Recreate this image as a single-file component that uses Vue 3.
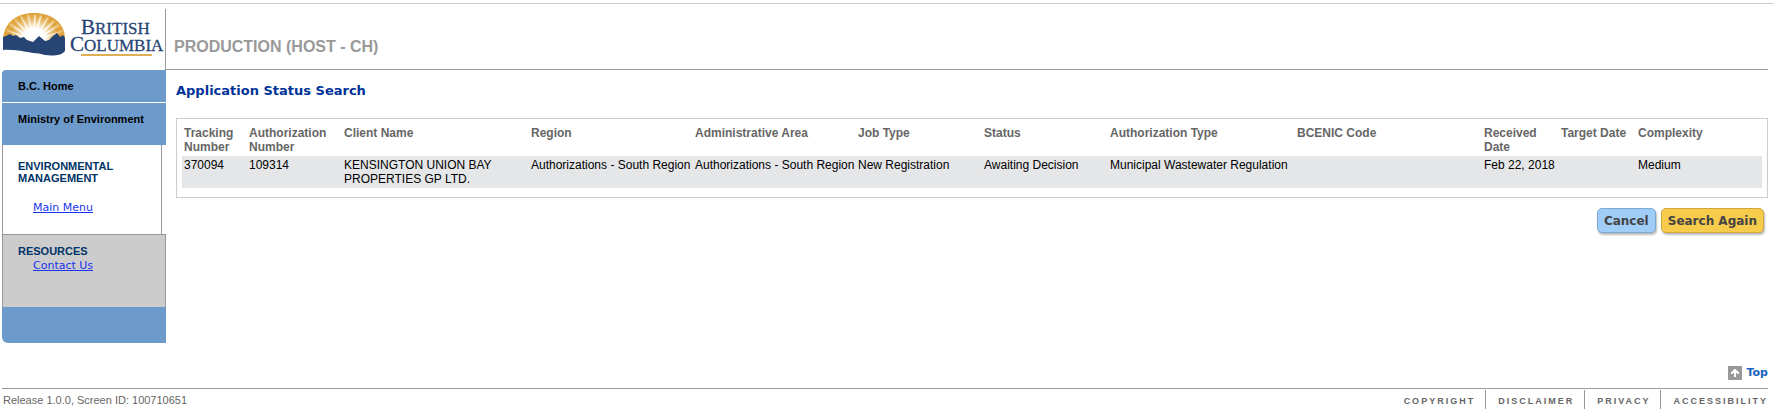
<script setup>
const columns = [
  { key: 'tracking', label: 'Tracking Number' },
  { key: 'authorization', label: 'Authorization Number' },
  { key: 'client', label: 'Client Name' },
  { key: 'region', label: 'Region' },
  { key: 'area', label: 'Administrative Area' },
  { key: 'job', label: 'Job Type' },
  { key: 'status', label: 'Status' },
  { key: 'authType', label: 'Authorization Type' },
  { key: 'bcenic', label: 'BCENIC Code' },
  { key: 'received', label: 'Received Date' },
  { key: 'target', label: 'Target Date' },
  { key: 'complexity', label: 'Complexity' }
]
const rows = [
  {
    tracking: '370094',
    authorization: '109314',
    client: 'KENSINGTON UNION BAY PROPERTIES GP LTD.',
    region: 'Authorizations - South Region',
    area: 'Authorizations - South Region',
    job: 'New Registration',
    status: 'Awaiting Decision',
    authType: 'Municipal Wastewater Regulation',
    bcenic: '',
    received: 'Feb 22, 2018',
    target: '',
    complexity: 'Medium'
  }
]
const footerLinks = ['COPYRIGHT', 'DISCLAIMER', 'PRIVACY', 'ACCESSIBILITY']
</script>

<template>
  <div class="page">
    <header class="banner">
      <a class="logo" href="#" aria-label="British Columbia">
        <svg width="163" height="48" viewBox="0 0 163 48" aria-hidden="true">
          <defs>
            <radialGradient id="glow" gradientUnits="userSpaceOnUse" cx="32" cy="30" r="27">
              <stop offset="0.4" stop-color="#fff" />
              <stop offset="0.65" stop-color="#fff" stop-opacity="0.4" />
              <stop offset="0.9" stop-color="#fff" stop-opacity="0" />
            </radialGradient>
            <radialGradient id="rays" gradientUnits="userSpaceOnUse" cx="32" cy="30" r="27">
              <stop offset="0.5" stop-color="#fff" />
              <stop offset="1" stop-color="#fff" stop-opacity="0.3" />
            </radialGradient>
          </defs>
          <path d="M1 30C2 14 14 4 32 4s31 10 31 26v4H1z" fill="#e0a43c" />
          <path
            d="M32 32 4 22l1-2zM32 32 7 16l2-2zM32 32 12 11l2-1zM32 32 18 8l2-1zM32 32 25 6h2zM32 32 32 6h2zM32 32 38 6l2 1zM32 32 45 8l2 1zM32 32 51 11l2 2zM32 32 56 15l2 2zM32 32 60 21l1 2z"
            fill="url(#rays)"
          />
          <path d="M1 30C2 14 14 4 32 4s31 10 31 26v4H1z" fill="url(#glow)" />
          <path
            d="M1 28 4 27 8 25l3 2 3-1 4 3 4-1 3 3 6 2 6-6 6 5 4-1 4-4 4-3 3 4 3-2 2 3v13q-3 4-11 4.500T37 44.500C26 44 15 40 1 41z"
            fill="#264474"
          />
          <rect x="79" y="45" width="71" height="2" fill="#e0ae55" />
          <g class="brand">
            <text x="79" y="25">B<tspan class="small">RITISH</tspan></text>
            <text x="68" y="42">C<tspan class="small">OLUMBIA</tspan></text>
          </g>
        </svg>
      </a>
      <div class="environment">PRODUCTION (HOST - CH)</div>
    </header>

    <div class="body">
      <nav class="sidebar">
        <a class="home" href="#">B.C. Home</a>
        <a class="ministry" href="#">Ministry of Environment</a>
        <section class="management">
          <h2>ENVIRONMENTAL MANAGEMENT</h2>
          <a href="#">Main Menu</a>
        </section>
        <section class="resources">
          <h2>RESOURCES</h2>
          <a href="#">Contact Us</a>
        </section>
        <div class="sidebar-end"></div>
      </nav>

      <main>
        <h1>Application Status Search</h1>
        <div class="results">
          <table>
            <colgroup>
              <col v-for="c in columns" :key="c.key" :class="'col-' + c.key" />
            </colgroup>
            <thead>
              <tr>
                <th v-for="c in columns" :key="c.key" scope="col">{{ c.label }}</th>
              </tr>
            </thead>
            <tbody>
              <tr v-for="r in rows" :key="r.tracking">
                <td v-for="c in columns" :key="c.key">{{ r[c.key] }}</td>
              </tr>
            </tbody>
          </table>
        </div>
        <div class="actions">
          <button type="button" class="cancel">Cancel</button>
          <button type="button" class="search">Search Again</button>
        </div>
      </main>
    </div>

    <div class="top-row">
      <a class="top" href="#">
        <svg width="14" height="14" viewBox="0 0 14 14" shape-rendering="crispEdges" aria-hidden="true">
          <rect width="14" height="14" fill="#999" />
          <path d="M6 3h2v1h1v1h1v1h1v2H9V7H8v4H6V7H5v1H3V6h1V5h1V4h1z" fill="#fff" />
        </svg>
        Top
      </a>
    </div>

    <footer>
      <span class="release">Release 1.0.0, Screen ID: 100710651</span>
      <nav class="links">
        <a v-for="l in footerLinks" :key="l" href="#">{{ l }}</a>
      </nav>
    </footer>
  </div>
</template>

<style>
body {
  background: #fff;
}
</style>

<style scoped>
.page {
  margin-top: 3px;
  padding: 0 6px 0 2px;
  border-top: 1px solid #ccc;
  font-family: "Liberation Sans", Arial, sans-serif;
  font-size: 12px;
}
.banner {
  display: flex;
  padding-top: 5px;
}
.logo {
  width: 163px;
  height: 61px;
  flex: none;
}
.logo svg {
  display: block;
}
.brand {
  font-family: "Liberation Serif", serif;
  font-size: 21px;
  fill: #264474;
  stroke: #264474;
  stroke-width: 0.3px;
}
.small {
  font-size: 17px;
}
.environment {
  flex: 1;
  box-sizing: border-box;
  height: 61px;
  padding: 29px 0 0 8px;
  border-left: 1px solid #999;
  border-bottom: 1px solid #999;
  color: #999;
  font-size: 16px;
  line-height: 18px;
  font-weight: bold;
}
.body {
  display: flex;
}
.sidebar {
  width: 164px;
  flex: none;
  display: flex;
  flex-direction: column;
  font-size: 11px;
  line-height: 12px;
}
.home,
.ministry {
  padding: 10px 16px 0;
  background: #6c9bcb;
  color: #000;
  font-weight: bold;
  text-decoration: none;
}
.home {
  height: 22px;
  border-radius: 4px 0 0 0;
  border-bottom: 1px solid #fff;
}
.ministry {
  height: 32px;
}
.management {
  margin-right: 4px;
  padding: 15px 15px 18px;
  border: 1px solid #999;
  border-width: 0 1px;
}
.resources {
  padding: 10px 15px 33px;
  border: 1px solid #999;
  border-bottom: 0;
  background: #ccc;
}
h2 {
  margin: 0;
  color: #036;
  font-size: 11px;
  line-height: 12px;
}
section a {
  display: block;
  margin-left: 15px;
  color: #1a35f0;
  font-family: Verdana, "DejaVu Sans", sans-serif;
  line-height: 16px;
}
.management a {
  margin-top: 16px;
}
.resources a {
  margin-top: 1px;
}
.sidebar-end {
  height: 36px;
  background: #6c9bcb;
  border-radius: 0 0 0 6px;
}
main {
  flex: 1;
  min-width: 0;
  padding-left: 10px;
}
h1 {
  margin: 13px 0 19px;
  color: #039;
  font-family: Verdana, "DejaVu Sans", sans-serif;
  font-size: 13px;
  line-height: 16px;
}
.results {
  padding: 6px 5px 9px;
  border: 1px solid #ccc;
}
table {
  width: 100%;
  table-layout: fixed;
  border-collapse: collapse;
  line-height: 14px;
}
th,
td {
  padding: 2px 0 2px 2px;
  text-align: left;
  vertical-align: top;
}
th {
  padding-top: 1px;
  color: #666;
}
tbody tr {
  background: #e5e6e8;
}
.col-tracking { width: 65px; }
.col-authorization { width: 95px; }
.col-client,
.col-authType,
.col-bcenic { width: 187px; }
.col-region { width: 164px; }
.col-area { width: 163px; }
.col-job,
.col-status,
.col-complexity { width: 126px; }
.col-received,
.col-target { width: 77px; }
.actions {
  display: flex;
  justify-content: flex-end;
  gap: 5px;
  padding: 10px 4px 0 0;
}
button {
  height: 25px;
  padding: 0 6px;
  border-radius: 5px;
  color: #444;
  font-family: Verdana, "DejaVu Sans", sans-serif;
  font-size: 12px;
  font-weight: bold;
  box-shadow: 1px 2px 2px #bbb;
}
.cancel {
  border: 1px solid #7ba9d0;
  background: #9fcdf8;
}
.search {
  border: 1px solid #d1a73a;
  background: #f7cb4b;
}
.top-row {
  display: flex;
  justify-content: flex-end;
  padding: 22px 0 7px;
}
.top {
  display: flex;
  align-items: center;
  gap: 5px;
  color: #1a63bd;
  font-family: Verdana, "DejaVu Sans", sans-serif;
  font-size: 11px;
  line-height: 16px;
  font-weight: bold;
  text-decoration: none;
}
footer {
  display: flex;
  justify-content: space-between;
  border-top: 1px solid #999;
}
.release {
  padding: 4px 1px;
  color: #666;
  font-size: 11px;
  line-height: 14px;
}
.links {
  display: flex;
  padding-top: 1px;
}
.links a {
  height: 16px;
  padding: 3px 10px 0 12px;
  color: #666;
  font-size: 9px;
  line-height: 16px;
  font-weight: bold;
  letter-spacing: 2px;
  text-decoration: none;
}
.links a + a {
  border-left: 1px solid #999;
}
.links a:last-child {
  padding-right: 0;
}
</style>
